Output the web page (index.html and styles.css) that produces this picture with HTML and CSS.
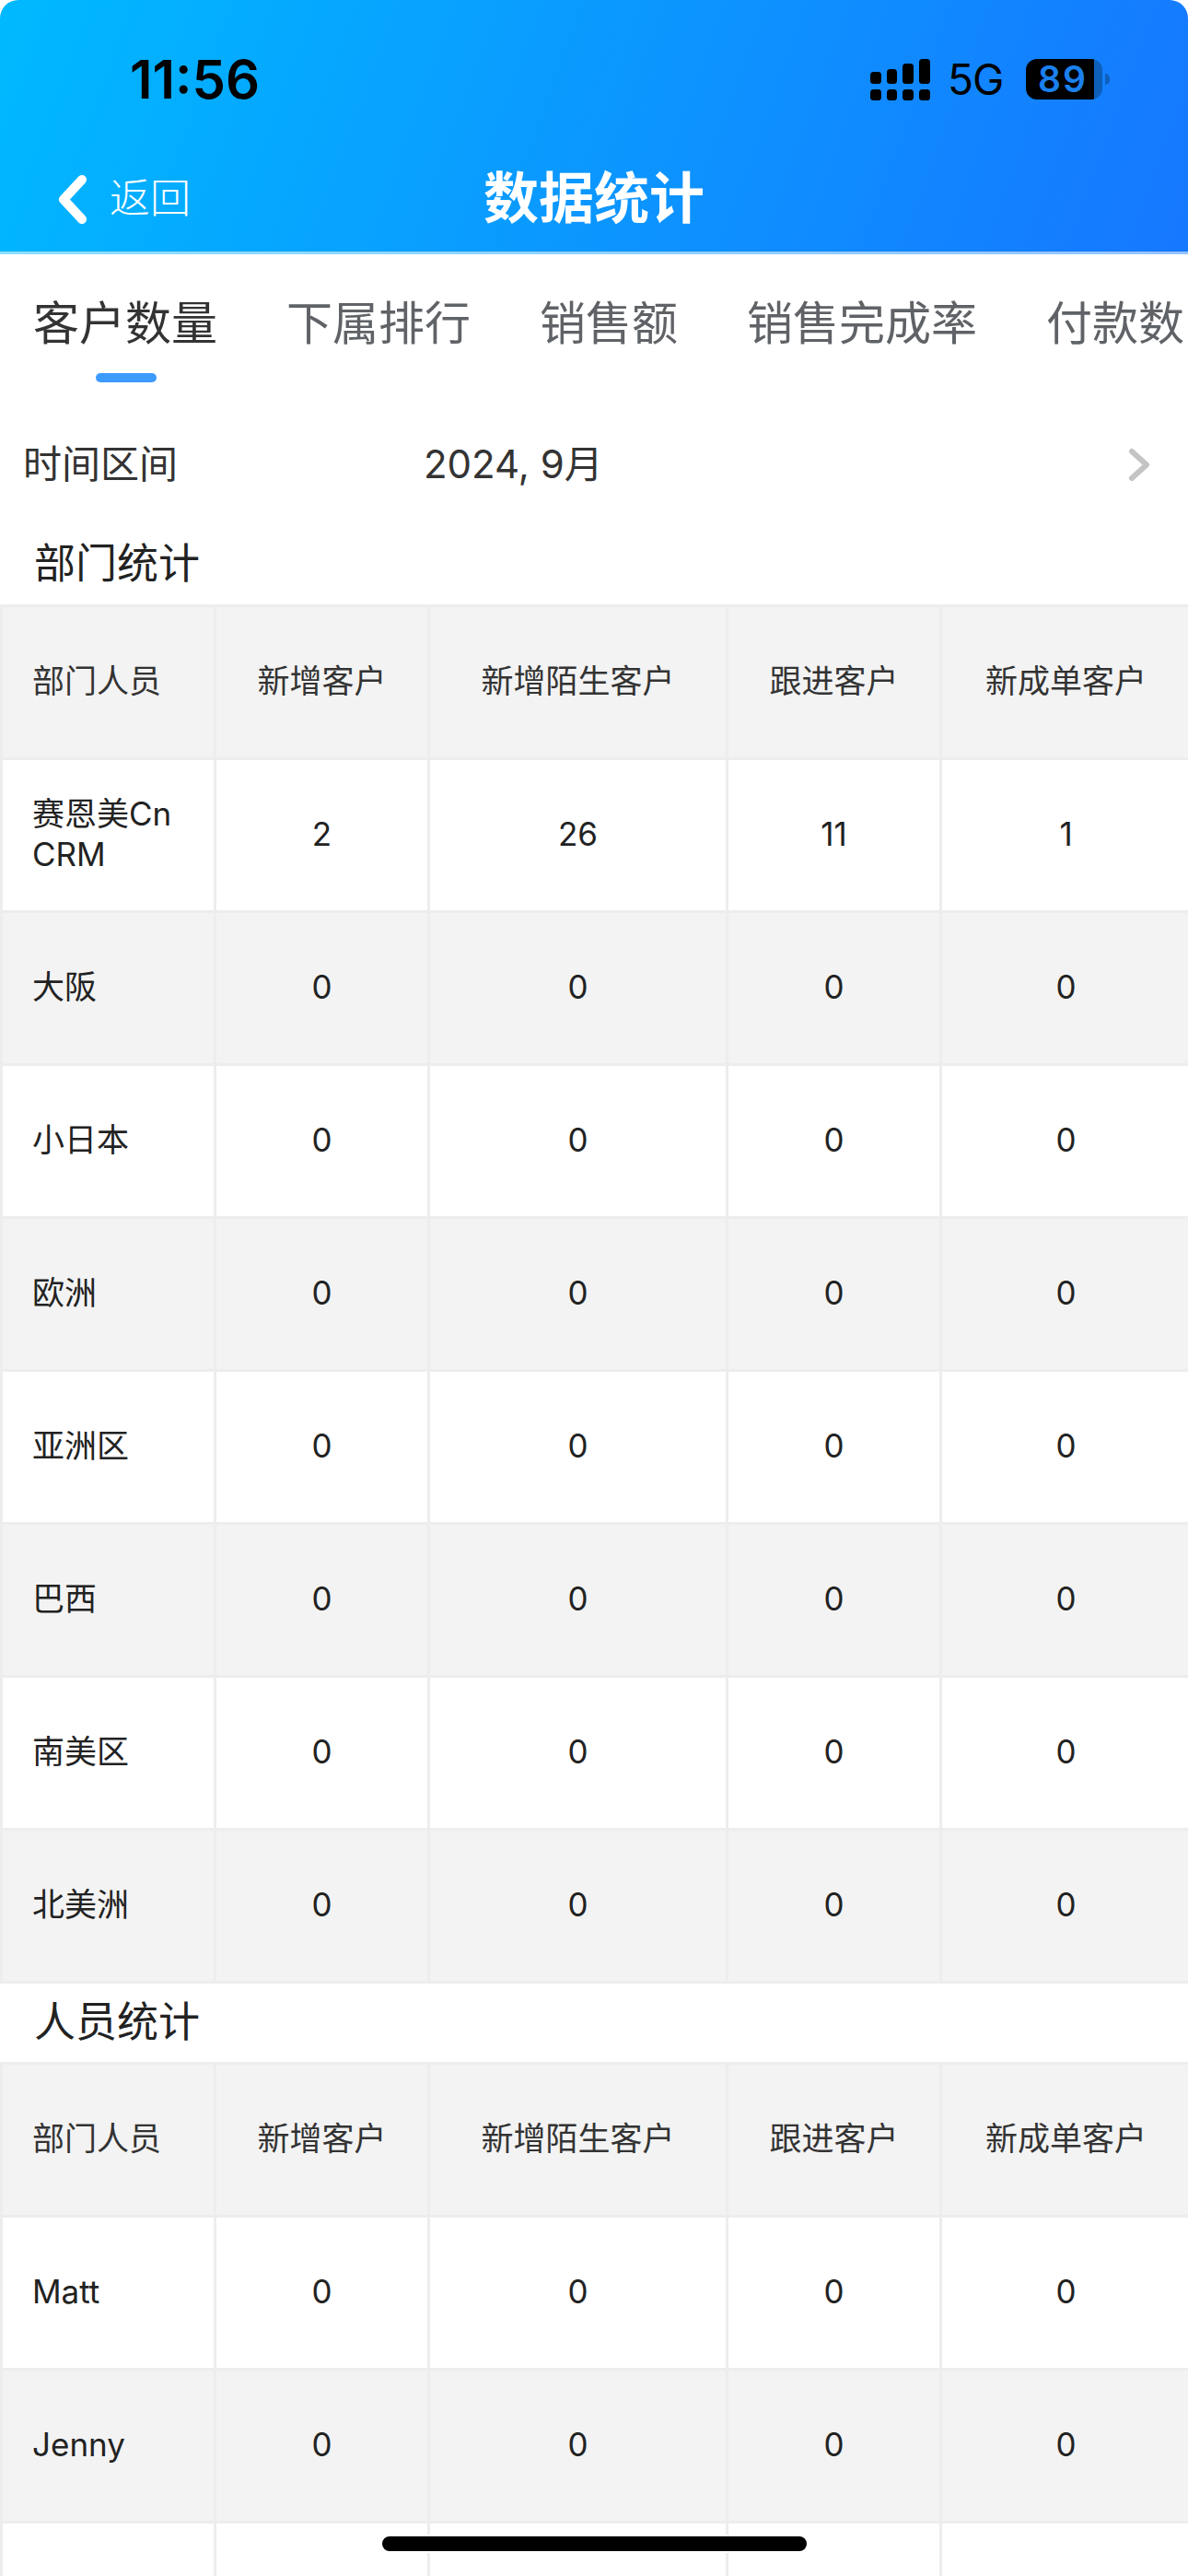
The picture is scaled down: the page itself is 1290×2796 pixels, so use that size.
FILE: index.html
```html
<!DOCTYPE html>
<html lang="zh-CN">
<head>
<meta charset="utf-8">
<title>数据统计</title>
<link rel="stylesheet" href="styles.css">
</head>
<body>
<div class="page">
  <header class="top">
    <div class="status">
      <span class="clock">11:56</span>
      <div class="status-right">
        <svg class="signal" width="65" height="45" viewBox="0 0 65 45" aria-hidden="true">
          <rect x="0" y="14" width="12" height="13" rx="3.5"/>
          <rect x="18" y="11" width="11" height="16" rx="3.5"/>
          <rect x="35" y="5" width="12" height="22" rx="3.5"/>
          <rect x="53" y="0" width="12" height="27" rx="3.5"/>
          <rect x="0" y="33" width="12" height="12" rx="3.5"/>
          <rect x="18" y="33" width="11" height="12" rx="3.5"/>
          <rect x="35" y="33" width="12" height="12" rx="3.5"/>
          <rect x="53" y="33" width="12" height="12" rx="3.5"/>
        </svg>
        <span class="net">5G</span>
        <div class="battery"><span class="battery-num">89</span></div>
      </div>
    </div>
    <nav class="nav">
      <a class="back">
        <svg class="chevron" width="32" height="53" viewBox="0 0 32 53" aria-hidden="true">
          <path d="M26 5 L6 26.5 L26 48" fill="none" stroke="#fff" stroke-width="10" stroke-linecap="round" stroke-linejoin="round"/>
        </svg>
        <span class="back-text">返回</span>
      </a>
      <h1 class="title">数据统计</h1>
    </nav>
  </header>

  <div class="tabs">
    <div class="tab tab-active">客户数量<i class="tab-bar"></i></div>
    <div class="tab">下属排行</div>
    <div class="tab">销售额</div>
    <div class="tab">销售完成率</div>
    <div class="tab">付款数</div>
  </div>

  <div class="range">
    <span class="range-label">时间区间</span>
    <span class="range-value">2024, 9月</span>
    <svg class="range-arrow" width="24" height="37" viewBox="0 0 24 37" aria-hidden="true">
      <path d="M4 4 L20 18.5 L4 33" fill="none" stroke="#c4c4c4" stroke-width="6" stroke-linecap="round" stroke-linejoin="round"/>
    </svg>
  </div>

  <h2 class="section section-first">部门统计</h2>
  <table class="grid">
    <colgroup><col class="c1"><col class="c2"><col class="c3"><col class="c4"><col class="c5"></colgroup>
    <thead>
      <tr><th>部门人员</th><th>新增客户</th><th>新增陌生客户</th><th>跟进客户</th><th>新成单客户</th></tr>
    </thead>
    <tbody>
      <tr><td>赛恩美Cn<br>CRM</td><td>2</td><td>26</td><td>11</td><td>1</td></tr>
      <tr><td>大阪</td><td>0</td><td>0</td><td>0</td><td>0</td></tr>
      <tr><td>小日本</td><td>0</td><td>0</td><td>0</td><td>0</td></tr>
      <tr><td>欧洲</td><td>0</td><td>0</td><td>0</td><td>0</td></tr>
      <tr><td>亚洲区</td><td>0</td><td>0</td><td>0</td><td>0</td></tr>
      <tr><td>巴西</td><td>0</td><td>0</td><td>0</td><td>0</td></tr>
      <tr><td>南美区</td><td>0</td><td>0</td><td>0</td><td>0</td></tr>
      <tr><td>北美洲</td><td>0</td><td>0</td><td>0</td><td>0</td></tr>
    </tbody>
  </table>

  <h2 class="section">人员统计</h2>
  <table class="grid">
    <colgroup><col class="c1"><col class="c2"><col class="c3"><col class="c4"><col class="c5"></colgroup>
    <thead>
      <tr><th>部门人员</th><th>新增客户</th><th>新增陌生客户</th><th>跟进客户</th><th>新成单客户</th></tr>
    </thead>
    <tbody>
      <tr><td>Matt</td><td>0</td><td>0</td><td>0</td><td>0</td></tr>
      <tr><td>Jenny</td><td>0</td><td>0</td><td>0</td><td>0</td></tr>
      <tr><td></td><td></td><td></td><td></td><td></td></tr>
    </tbody>
  </table>

  <div class="home-bar"></div>
</div>
</body>
</html>
```

FILE: styles.css
```css
* {
  box-sizing: border-box;
}

html,
body {
  margin: 0;
  padding: 0;
  background: #fff;
}

.page {
  position: relative;
  width: 1290px;
  height: 2796px;
  overflow: hidden;
  background: #fff;
  font-family: Inter, "Noto Sans CJK SC", sans-serif;
  color: #333;
}

/* Header */
.top {
  height: 276px;
  background: linear-gradient(110deg, #00b9ff 0%, #1677ff 100%);
  border-bottom: 3px solid rgba(255, 255, 255, 0.55);
  border-radius: 20px 20px 0 0;
}

.status {
  height: 160px;
  padding: 12px 86px 0 141px;
  display: flex;
  align-items: center;
  justify-content: space-between;
  color: #000;
}

.clock {
  font-size: 58px;
  font-weight: 600;
  letter-spacing: 0;
}

.status-right {
  display: flex;
  align-items: center;
  width: 259px;
}

.signal {
  flex: none;
  fill: #000;
}

.net {
  margin-left: 19px;
  font-size: 46px;
  font-weight: 400;
  letter-spacing: -1px;
  width: 85px;
}

.battery {
  position: relative;
  flex: none;
  width: 83px;
  height: 44px;
  border-radius: 12px;
  background: linear-gradient(90deg, #000 0, #000 74px, #0e5fba 74px);
  text-align: left;
  padding-left: 13px;
  line-height: 44px;
  white-space: nowrap;
}

.battery::after {
  content: "";
  position: absolute;
  left: 86px;
  top: 16px;
  width: 5px;
  height: 12px;
  border-radius: 0 6px 6px 0;
  background: #0e5fba;
}

.battery-num {
  font-size: 39px;
  font-weight: 600;
  letter-spacing: 2px;
  color: #1a80ee;
}

.nav {
  position: relative;
  height: 113px;
  display: flex;
  align-items: center;
  justify-content: center;
}

.back {
  position: absolute;
  left: 63px;
  top: 30px;
  display: flex;
  align-items: center;
  gap: 24px;
  color: #fff;
}

.chevron {
  flex: none;
}

.back-text {
  font-size: 44px;
  font-weight: 300;
  line-height: 51px;
  height: 53px;
}

.title {
  margin: 0 0 3px;
  font-size: 60px;
  font-weight: 700;
  line-height: 80px;
  color: #fff;
}

/* Tabs */
.tabs {
  position: relative;
  height: 174px;
  padding: 40px 0 0 36px;
  display: flex;
  gap: 75px;
  white-space: nowrap;
}

.tab {
  position: relative;
  flex: none;
  font-size: 50px;
  line-height: 70px;
  color: #5f6266;
}

.tab-active {
  color: #333;
}

.tab-bar {
  position: absolute;
  left: 68px;
  top: 89px;
  width: 66px;
  height: 10px;
  border-radius: 5px;
  background: #3d9bff;
}

/* Time range */
.range {
  height: 105px;
  padding: 0 41px 4px 25px;
  display: flex;
  align-items: center;
  font-size: 42px;
  color: #333;
}

.range-label {
  width: 435px;
}

.range-value {
  flex: 1;
  letter-spacing: 0;
}

.range-arrow {
  flex: none;
  margin-top: 8px;
}

/* Sections */
.section {
  margin: 0;
  height: 85px;
  padding: 0 0 8px 37px;
  display: flex;
  align-items: center;
  font-size: 45px;
  font-weight: 400;
  color: #222;
}

.section-first {
  margin: 15px 0 1px;
}

/* Tables */
.grid {
  width: 1295px;
  table-layout: fixed;
  border-collapse: separate;
  border-spacing: 0;
  border-top: 3px solid #ededed;
  border-left: 3px solid #ededed;
}

.c1,
.c2,
.c4 {
  width: 232px;
}

.c3 {
  width: 324px;
}

.c5 {
  width: 272px;
}

.grid th,
.grid td {
  height: 166px;
  padding: 0 0 3px;
  border-right: 3px solid #ededed;
  border-bottom: 3px solid #ededed;
  text-align: center;
  vertical-align: middle;
  font-size: 35px;
  font-weight: 400;
  line-height: 44px;
  color: #222;
}

.grid th {
  background: #f3f3f3;
  color: #333;
}

.grid th:first-child,
.grid td:first-child {
  padding-left: 32px;
  text-align: left;
}

.grid tbody tr:nth-child(even) td {
  background: #f3f3f3;
}

/* Home indicator */
.home-bar {
  position: absolute;
  left: 413px;
  top: 2751px;
  width: 465px;
  height: 20px;
  border: 2px solid #fff;
  border-radius: 10px;
  background: #000;
}
```
